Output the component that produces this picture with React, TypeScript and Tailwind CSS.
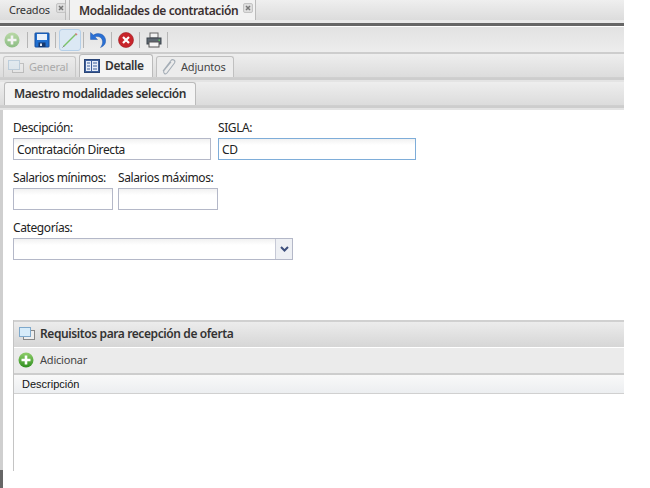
import React from 'react';

const PlusIcon = ({ faded = false }: { faded?: boolean }) => (
  <svg width="16" height="16" viewBox="0 0 16 16" className={faded ? 'opacity-50' : ''}>
    <defs>
      <linearGradient id="plusGrad" x1="0" y1="0" x2="0" y2="1">
        <stop offset="0" stopColor="#8fce6a" />
        <stop offset="1" stopColor="#2f8f1f" />
      </linearGradient>
    </defs>
    <circle cx="8" cy="8" r="7.5" fill="url(#plusGrad)" />
    <path d="M8 3.5v9M3.5 8h9" stroke="#fff" strokeWidth="2.6" />
  </svg>
);

const SaveIcon = () => (
  <svg width="16" height="16" viewBox="0 0 16 16">
    <path d="M1 1.5A.5.5 0 0 1 1.5 1h13a.5.5 0 0 1 .5.5v13a.5.5 0 0 1-.5.5h-13a.5.5 0 0 1-.5-.5z" fill="#1f6fd0" stroke="#164f9e" />
    <rect x="3" y="2" width="10" height="6" fill="#e8f0fb" />
    <rect x="4.5" y="10.5" width="7" height="4.5" fill="#16386e" />
    <rect x="6" y="11.5" width="2" height="2.5" fill="#dfe8f5" />
  </svg>
);

const PencilIcon = () => (
  <svg width="18" height="18" viewBox="0 0 18 18">
    <path d="M2.5 15.5 L15 3" stroke="#7cc26a" strokeWidth="1.5" />
    <path d="M14.5 2.5 L16 4" stroke="#d77a7a" strokeWidth="1.5" />
    <path d="M1.5 16.5 L3 15" stroke="#888" strokeWidth="1" />
  </svg>
);

const UndoIcon = () => (
  <svg width="16" height="16" viewBox="0 0 16 16">
    <path d="M0.5 0.5 L0.5 7.5 L7.5 7.5 L5 5 C8.5 3.5 12 5.5 12.5 9 C12.8 11.5 12 13.5 10.5 15.5 C14.5 14 16 11 15.6 8 C15 3 9.5 -0.5 3.5 3 Z" fill="#2a6fd4" stroke="#1a4fa0" strokeWidth="0.4" />
  </svg>
);

const DeleteIcon = () => (
  <svg width="16" height="16" viewBox="0 0 16 16">
    <circle cx="8" cy="8" r="7.5" fill="#c8252b" stroke="#9c1f24" strokeWidth="0.6" />
    <path d="M5 5l6 6M11 5l-6 6" stroke="#fff" strokeWidth="2.2" />
  </svg>
);

const PrintIcon = () => (
  <svg width="16" height="16" viewBox="0 0 16 16">
    <rect x="4" y="1" width="8" height="5" fill="#f2f2f2" stroke="#666" />
    <rect x="1" y="6" width="14" height="6" fill="#5d6670" stroke="#3d444c" />
    <rect x="3" y="10" width="10" height="5" fill="#f5f5f5" stroke="#555" />
    <rect x="12.5" y="7.5" width="1.5" height="1.5" fill="#5fc060" />
  </svg>
);

const WindowsIcon = ({ faded = false }: { faded?: boolean }) => (
  <svg width="16" height="16" viewBox="0 0 16 16" className={faded ? 'opacity-40' : ''}>
    <rect x="4.5" y="4.5" width="11" height="9" fill="#eee" stroke="#888" />
    <rect x="0.5" y="1.5" width="11" height="9" fill="#d7ecfa" stroke="#7fa9cc" />
  </svg>
);

const DetailIcon = () => (
  <svg width="16" height="16" viewBox="0 0 16 16">
    <rect x="0.5" y="1.5" width="15" height="13" fill="#3d5f9c" stroke="#2b4678" />
    <rect x="2" y="3" width="5" height="10" fill="#e8eef8" />
    <rect x="8" y="3" width="6" height="10" fill="#e8eef8" />
    <path d="M3 5h3M3 8h3M3 11h3M9 5h4M9 8h4M9 11h4" stroke="#3d5f9c" />
  </svg>
);

const ClipIcon = () => (
  <svg width="16" height="18" viewBox="0 0 16 18" fill="none">
    <path d="M2 13 L10 2.5 C11.5 0.5 15 2.5 13.5 5 L6 15 C4.5 17 1.5 15 3 12.5 L10 4" stroke="#a4adb6" strokeWidth="1.1" />
  </svg>
);

const CloseBox = () => (
  <span className="shrink-0 -mt-[5px] w-[10px] h-[10px] bg-[#dedede] border border-[#c4c4c4] rounded-[2px] flex items-center justify-center">
    <svg width="6" height="6" viewBox="0 0 6 6">
      <path d="M1 1l4 4M5 1l-4 4" stroke="#777" strokeWidth="1.5" />
    </svg>
  </span>
);

const Slot = ({ children, first }: { children: React.ReactNode; first?: boolean }) => (
  <div className={`w-[28px] h-[16px] flex items-center justify-center border-r border-[#b5b5b5] ${first ? 'pr-[3px]' : ''}`}>
    {children}
  </div>
);

const Field = ({ label, value, width, focus }: { label: string; value?: string; width: string; focus?: boolean }) => (
  <div className={`flex flex-col ${width}`}>
    <div className="h-[18px] text-[12px] leading-[16px] text-[#222] whitespace-nowrap">{label}</div>
    <div
      className={`h-[22px] border ${focus ? 'border-[#7eadd9]' : 'border-[#b4b8c8]'} bg-gradient-to-b from-[#f1f1f1] to-white to-[30%] px-[3px] text-[12px] leading-[21px] text-[#222]`}
    >
      {value}
    </div>
  </div>
);

const App: React.FC = () => {
  return (
    <div className="w-[650px] h-[488px] bg-white flex flex-col overflow-hidden font-['Noto_Sans',Tahoma,sans-serif] tracking-[-0.4px]">
      <div className="w-[624px] shrink-0">
        {/* Top tabs */}
        <div className="h-[23px] bg-gradient-to-b from-[#efefef] to-[#dcdcdc] border-b-[3px] border-[#e9e9e9] flex items-end text-[12px] text-[#333]">
          <div className="h-[20px] w-[66px] flex items-center pl-[9px] pt-[1px] gap-[6px] border-r border-[#bbb]">
            <span className="text-[11px] tracking-[-0.2px]">Creados</span>
            <CloseBox />
          </div>
          <div className="ml-[3px] h-[20px] w-[187px] flex items-center pl-[9px] pt-[1px] gap-[5px] bg-[#f2f2f2] border-x border-[#bbb]">
            <span className="font-semibold text-[#3a3030] whitespace-nowrap">Modalidades de contratación</span>
            <CloseBox />
          </div>
        </div>
        <div className="h-[3px] bg-[#666]" />
        <div className="h-px bg-white" />

        {/* Toolbar */}
        <div className="h-[25px] bg-gradient-to-b from-[#e2e2e2] to-[#ededed] flex items-center">
          <Slot first>
            <PlusIcon faded />
          </Slot>
          <Slot>
            <SaveIcon />
          </Slot>
          <Slot>
            <div className="shrink-0 w-[22px] h-[22px] flex items-center justify-center border border-[#b5cfe8] rounded-[3px] bg-[#dbe8f4]">
              <PencilIcon />
            </div>
          </Slot>
          <Slot>
            <UndoIcon />
          </Slot>
          <Slot>
            <DeleteIcon />
          </Slot>
          <Slot>
            <PrintIcon />
          </Slot>
        </div>
        <div className="h-[2px] bg-[#cdcdcd]" />

        {/* Section tabs */}
        <div className="h-[24px] bg-gradient-to-b from-[#eeeeee] to-[#dcdcdc] border-b border-[#cfcfcf] flex items-end pl-[3px] gap-[3px] text-[12px]">
          <div className="h-[21px] w-[73px] flex items-center pl-[4px] gap-[5px] border border-b-0 border-[#c8c8c8] rounded-t-[3px] text-[#aaa] text-[11px] tracking-[-0.2px]">
            <WindowsIcon faded />
            <span>General</span>
          </div>
          <div className="h-[23px] w-[74px] flex items-center pl-[4px] gap-[5px] border border-b-0 border-[#bbb] rounded-t-[3px] bg-[#f4f4f4] text-[#333] font-semibold">
            <DetailIcon />
            <span>Detalle</span>
          </div>
          <div className="h-[21px] w-[78px] flex items-center pl-[4px] gap-[4px] border border-b-0 border-[#c0c0c0] rounded-t-[3px] bg-[#ececec] text-[#444] text-[11px] tracking-[-0.2px]">
            <ClipIcon />
            <span>Adjuntos</span>
          </div>
        </div>
        <div className="h-[4px] bg-[#e4e4e4] border-t-[2px] border-[#cdcdcd] box-border" />

        {/* Inner tab */}
        <div className="h-[24px] bg-gradient-to-b from-[#eeeeee] to-[#dcdcdc] border-b border-[#cfcfcf] flex items-end pl-[4px] text-[12px]">
          <div className="h-[23px] w-[192px] flex items-center pl-[9px] border border-b-0 border-[#bbb] rounded-t-[3px] bg-[#f4f4f4] font-semibold text-[#333] whitespace-nowrap">
            Maestro modalidades selección
          </div>
        </div>
        <div className="h-[4px] bg-[#e4e4e4] border-t-[2px] border-[#cdcdcd] box-border" />
      </div>

      {/* Body */}
      <div className="flex-1 flex min-h-0">
        <div className="w-[3px] flex flex-col">
          <div className="flex-1 bg-[#cfcfcf]" />
          <div className="h-[18px] bg-[#666]" />
        </div>
        <div className="w-[621px] pl-[10px] pt-[10px]">
          <div className="flex gap-[7px]">
            <Field label="Descipción:" value="Contratación Directa" width="w-[198px]" />
            <Field label="SIGLA:" value="CD" width="w-[198px]" focus />
          </div>
          <div className="flex gap-[5px] mt-[10px]">
            <Field label="Salarios mínimos:" width="w-[100px]" />
            <Field label="Salarios máximos:" width="w-[100px]" />
          </div>
          <div className="mt-[10px] w-[280px]">
            <div className="h-[18px] text-[12px] leading-[16px] text-[#222]">Categorías:</div>
            <div className="h-[22px] flex border border-[#b4b8c8] bg-gradient-to-b from-[#f1f1f1] to-white to-[30%]">
              <div className="flex-1" />
              <div className="w-[17px] border-l border-[#c6c9d6] bg-[#eef0f4] flex items-center justify-center">
                <svg width="9" height="6" viewBox="0 0 9 6">
                  <path d="M1 1l3.5 3.5L8 1" fill="none" stroke="#3d4f7c" strokeWidth="2" />
                </svg>
              </div>
            </div>
          </div>

          {/* Requisitos panel */}
          <div className="mt-[60px] h-[151px] border-l border-[#c4c4c4] flex flex-col">
            <div className="h-[27px] border-t-2 border-[#d0d0d0] bg-gradient-to-b from-[#ececec] to-[#d6d6d6] flex items-center pl-[5px] pb-[1px] gap-[5px] text-[12px] font-semibold text-[#333]">
              <WindowsIcon />
              <span>Requisitos para recepción de oferta</span>
            </div>
            <div className="h-[26px] border-t border-white bg-[#ebebeb] flex items-center pl-[4px] pb-[1px] gap-[6px] text-[11px] tracking-[-0.2px] text-[#444]">
              <PlusIcon />
              <span>Adicionar</span>
            </div>
            <div className="h-[21px] border-t-2 border-[#cdcdcd] border-b border-b-[#d0d0d0] bg-gradient-to-b from-[#f9f9f9] to-[#eceef0] pl-[8px] text-[11px] leading-[18px] text-[#111] font-['Liberation_Sans',Arial,sans-serif] tracking-normal">
              Descripción
            </div>
          </div>
        </div>
      </div>
    </div>
  );
};

export default App;
